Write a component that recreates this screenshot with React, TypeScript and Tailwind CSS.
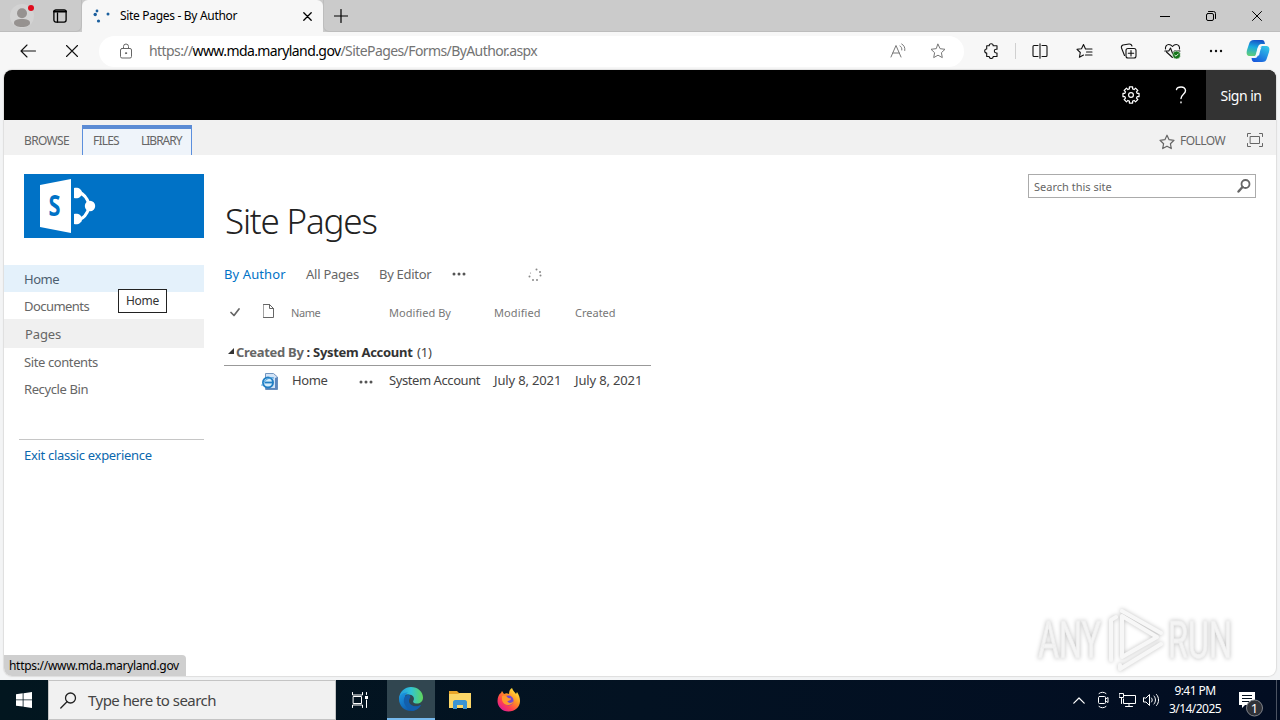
import React from "react";

type IconProps = { w: number; h: number; className?: string; sw?: number; children: React.ReactNode };

function Icon({ w, h, className = "", sw = 1, children }: IconProps) {
  return (
    <svg
      width={w}
      height={h}
      viewBox={`0 0 ${w} ${h}`}
      fill="none"
      stroke="currentColor"
      strokeWidth={sw}
      strokeLinejoin="round"
      strokeLinecap="round"
      className={`block shrink-0 ${className}`}
    >
      {children}
    </svg>
  );
}

const STAR = "M8 1.2l2.1 4.5 4.9.6-3.6 3.4.9 4.9L8 12.2l-4.3 2.4.9-4.9L1 6.3l4.9-.6z";

/* Outline of an eight-toothed gear centred on (9, 9). */
const GEAR =
  Array.from({ length: 8 }, (_, i) =>
    [
      [-0.26, 6.3],
      [-0.2, 8.2],
      [0.2, 8.2],
      [0.26, 6.3],
    ]
      .map(([offset, r]) => {
        const a = (i * Math.PI) / 4 + offset;
        return `${(9 + r * Math.sin(a)).toFixed(2)} ${(9 - r * Math.cos(a)).toFixed(2)}`;
      })
      .join("L")
  ).reduce((d, part, i) => d + (i === 0 ? "M" : "L") + part, "") + "Z";

function TabStrip() {
  return (
    <div className="flex h-8 bg-[#cbcbcb] text-black">
      <div className="flex w-[82px] rounded-br-md border-b border-r border-[#bdbdbd] pt-[4px]">
        <Icon w={28} h={26} className="ml-[8px]">
          <circle cx="14" cy="12" r="12" fill="#d3d3d3" stroke="none" />
          <circle cx="14" cy="9.3" r="5" fill="#969290" stroke="none" />
          <path d="M6 19c0-3 3-4 8-4s8 1 8 4c0 2.500-3.500 4-8 4s-8-1.500-8-4z" fill="#969290" stroke="none" />
          <circle cx="23" cy="4" r="3" fill="#e00b1c" stroke="none" />
        </Icon>
        <Icon w={14} h={14} sw={1.3} className="ml-[17px] mt-[5px]">
          <rect x="0.900" y="0.900" width="12.200" height="12.200" rx="2" />
          <path d="M1 2.500h12" strokeWidth="2" />
          <path d="M4.500 4v9" />
        </Icon>
      </div>
      <div className="flex w-[241px] items-center rounded-t-md bg-[#f7f7f7]">
        <Icon w={20} h={18} className="ml-[10px]">
          <g fill="#1b5f9e" stroke="none">
            <circle cx="5" cy="4" r="1.400" />
            <circle cx="3.200" cy="7.500" r="1.700" />
            <circle cx="6.500" cy="14" r="1.600" />
            <circle cx="16" cy="7" r="1.500" />
          </g>
        </Icon>
        <span className="ml-[8px] w-[183px] whitespace-nowrap text-[12px] leading-4 tracking-[-0.31px]">Site Pages - By Author</span>
        <Icon w={9} h={9} sw={1.3}>
          <path d="M.8.8l7.400 7.400M8.200.8L.8 8.200" />
        </Icon>
      </div>
      <div className="flex flex-1 items-center rounded-bl-md border-b border-l border-[#bdbdbd]">
        <Icon w={14} h={14} sw={1.2} className="ml-[10px]">
          <path d="M7 .5v13M.5 7h13" />
        </Icon>
        <Icon w={10} h={10} className="ml-auto">
          <path d="M0 5.500h10" />
        </Icon>
        <Icon w={10} h={10} className="ml-[36px]">
          <rect x=".5" y="2.500" width="7" height="7" rx="1.500" />
          <path d="M2.500.5h5a2 2 0 0 1 2 2v5" />
        </Icon>
        <Icon w={10} h={10} className="ml-[36px] mr-[18px]">
          <path d="M.5.5l9 9M9.500.5l-9 9" />
        </Icon>
      </div>
    </div>
  );
}

function Toolbar() {
  return (
    <div className="flex h-[38px] items-center bg-[#f7f7f7] text-[#111]">
      <Icon w={16} h={14} sw={1.1} className="ml-[20px]">
        <path d="M15.500 7H1M7 1L1 7l6 6" />
      </Icon>
      <Icon w={12} h={12} sw={1.1} className="ml-[30px]">
        <path d="M.5.5l11 11M11.500.5l-11 11" />
      </Icon>
      <div className="ml-[21px] flex h-[31px] w-[865px] items-center rounded-full bg-white">
        <Icon w={12} h={16} className="ml-[21px] text-[#666]">
          <rect x=".5" y="5.500" width="11" height="9.500" rx="1.500" />
          <path d="M3.500 5.500V3.500a2.500 2.500 0 0 1 5 0v2" />
          <circle cx="6" cy="10.200" r=".6" fill="currentColor" />
        </Icon>
        <span className="ml-[17px] whitespace-nowrap text-[14px] leading-5 tracking-[-0.59px] text-[#737373]">
          https://<span className="text-black">www.mda.maryland.gov</span>/SitePages/Forms/ByAuthor.aspx
        </span>
        <Icon w={17} h={16} className="ml-auto text-[#777]">
          <path d="M1 14L6 2.500 11 14M2.800 10h6.400M10 3c1.500.8 2 2.200 1.800 4M11.700 1c2.500 1.400 3.500 3.600 3.100 6.500" />
        </Icon>
        <Icon w={16} h={16} className="ml-[23px] mr-[18px] text-[#777]">
          <path d={STAR} />
        </Icon>
      </div>
      <Icon w={16} h={16} sw={1.1} className="ml-[19px]">
        <path d="M3.700 2.800H6.200a2 2 0 0 1 4 0h3.800v3.400h-.8a1.900 1.900 0 0 0 0 3.800h.8v3.500h-3.800a2 2 0 0 1-4 0H3.700V10a2 2 0 0 1 0-4z" />
      </Icon>
      <div className="ml-[16px] h-4 w-px bg-[#d0d0d0]" />
      <Icon w={16} h={16} sw={1.1} className="ml-[16px]">
        <path d="M6 2.500H2a1 1 0 0 0-1 1v9a1 1 0 0 0 1 1h4M10 2.500h4a1 1 0 0 1 1 1v9a1 1 0 0 1-1 1h-4M8 .8v14.400" />
      </Icon>
      <Icon w={17} h={16} sw={1.1} className="ml-[28px]">
        <path d="M9.500 6L7.500 1.500 5.500 5.800l-4.500.5 3.300 3.200-.9 4.800 4.100-2.300M9.500 6H16M10.500 9H16M9.500 12H16" />
      </Icon>
      <Icon w={17} h={16} sw={1.1} className="ml-[27px]">
        <rect x="6" y="5.500" width="10" height="9.500" rx="2" />
        <path d="M11 7.500v5.500M8.300 10.200h5.400M4.500 12.500L1.500 5A2.500 2.500 0 0 1 3 2l6-1c1.500-.2 2.500.5 3 2" />
      </Icon>
      <Icon w={17} h={16} sw={1.1} className="ml-[27px]">
        <path d="M8.500 14.500L2.500 9M1.500 6c-.4-2.500 1-4.500 3.300-4.500 1.700 0 2.800.9 3.700 2 .9-1.100 2-2 3.700-2 2.300 0 3.700 2 3.300 4.500M.8 8h4l1.700-3 2.300 6L10.500 8H16" />
        <circle cx="12.500" cy="12" r="4" fill="#16761b" stroke="#f7f7f7" strokeWidth=".6" />
        <path d="M10.800 12.200l1.200 1 2.200-2.200" stroke="#fff" strokeWidth=".9" />
      </Icon>
      <Icon w={14} h={4} className="ml-[28px]">
        <g fill="currentColor" stroke="none">
          <circle cx="2" cy="2" r="1.200" />
          <circle cx="7" cy="2" r="1.200" />
          <circle cx="12" cy="2" r="1.200" />
        </g>
      </Icon>
      <svg width="24" height="24" viewBox="0 0 24 24" className="ml-[23px] block shrink-0">
        <defs>
          <linearGradient id="cpA" x1="0.500" y1="0" x2="0.300" y2="1">
            <stop offset="0" stopColor="#1553c8" />
            <stop offset="0.450" stopColor="#19a9df" />
            <stop offset="1" stopColor="#62ce78" />
          </linearGradient>
          <linearGradient id="cpB" x1="0.800" y1="0" x2="0.200" y2="1">
            <stop offset="0" stopColor="#31c5e8" />
            <stop offset="1" stopColor="#1757dc" />
          </linearGradient>
        </defs>
        <path d="M8 1h8c2 0 2.500 1.500 3 4h-4c-2 0-3 2-4 6-1 4-1 6-3 6H4c-3 0-4-2-3-6l2-6c1-3 2-4 5-4z" fill="url(#cpA)" />
        <path d="M16 23H9c-3 0-3-2-3.500-4H9c2 0 3-2 4-6 1-4 1.500-6 4-6h3c3 0 4 2 3 6l-2 6c-1 3-2 4-5 4z" fill="url(#cpB)" />
        <path d="M12 8.500h3.500c-1.500 2-1.500 5-2.500 8H9.500c1.500-2 1.200-5 2.500-8z" fill="#f6fbff" />
      </svg>
    </div>
  );
}

function SuiteBar() {
  return (
    <div className="flex h-[50px] items-center justify-end bg-black text-white">
      <Icon w={18} h={18} sw={1.2} className="mr-[35px]">
        <path d={GEAR} />
        <circle cx="9" cy="9" r="2.400" />
      </Icon>
      <Icon w={12} h={18} sw={1.4} className="mr-[19px]">
        <path d="M1.500 3.500C2 1.500 4 1 6 1c3 0 4.500 1.500 4.500 3.700C10.500 8 6 8.500 6 12.500M6 16v.8" />
      </Icon>
      <div className="flex h-full w-[70px] items-center justify-center bg-[#333] text-[14px] tracking-[-0.5px]">Sign in</div>
    </div>
  );
}

function Ribbon() {
  return (
    <div className="flex h-[35px] items-start bg-[#f1f1f1] text-[12px] leading-4 text-[#666]">
      <span className="ml-[20px] mt-[13px] w-[58px] whitespace-nowrap tracking-[-0.65px]">BROWSE</span>
      <div className="mt-[5px] flex h-[30px] w-[110px] border-x border-t-4 border-x-[#5b8fdd] border-t-[#5b8bd4] bg-[#eff4fa] pt-[4px]">
        <span className="ml-[10px] w-[48px] whitespace-nowrap tracking-[-0.8px]">FILES</span>
        <span className="whitespace-nowrap tracking-[-1px]">LIBRARY</span>
      </div>
      <Icon w={16} h={16} sw={1.2} className="ml-auto mr-[5px] mt-[14px]">
        <path d={STAR} />
      </Icon>
      <span className="mt-[13px] w-[67px] whitespace-nowrap tracking-[-0.55px]">FOLLOW</span>
      <Icon w={16} h={14} className="mr-[13px] mt-[13px]">
        <rect x="3.500" y="3.500" width="9" height="7" />
        <path d="M.5 3.500v-3h3M12.500.5h3v3M15.500 10.500v3h-3M3.500 13.500h-3v-3" />
      </Icon>
    </div>
  );
}

function SiteLogo() {
  return (
    <div className="ml-[20px] h-16 w-[180px] bg-[#0072c6]">
      <svg width="80" height="64" viewBox="0 0 80 64" className="block">
        <path d="M16 11l31-6v54l-31-6z" fill="#fff" />
        <text x="24.500" y="42" fontSize="28" fontWeight="700" fill="#0072c6" textLength="12" lengthAdjust="spacingAndGlyphs">S</text>
        <g fill="#fff">
          <path d="M50 14c4-1 8 1 8 5 0 4-4 6-8 5z" />
          <path d="M50 40c4-1 8 1 8 5 0 4-4 6-8 5z" />
          <circle cx="66" cy="32" r="5.200" />
        </g>
        <path d="M55 18c5 2 8 6 10 12M55 46c5-2 8-6 10-12" stroke="#fff" strokeWidth="3" fill="none" />
      </svg>
    </div>
  );
}

function Sidebar() {
  return (
    <div className="relative w-[200px] shrink-0 pt-[19px] text-[13px] text-[#666]">
      <SiteLogo />
      <nav className="mt-[27px] whitespace-nowrap leading-[18px]">
        <div className="h-[27px] bg-[#e4f1fb] pl-[20px] pt-[5px] tracking-[-0.5px] text-[#4c5f70]">Home</div>
        <div className="h-[27px] pl-[20px] pt-[5px] tracking-[-0.55px]">Documents</div>
        <div className="h-[29px] bg-[#f0f0f0] pl-[21px] pt-[6px] tracking-[-0.1px]">Pages</div>
        <div className="h-[28px] pl-[20px] pt-[5px] tracking-[-0.4px]">Site contents</div>
        <div className="h-[28px] pl-[20px] pt-[4px] tracking-[-0.4px]">Recycle Bin</div>
      </nav>
      <div className="ml-[15px] mt-[35px] whitespace-nowrap border-t border-[#c6c6c6] pl-[5px] pt-[6px] leading-[18px] tracking-[-0.31px] text-[#0b68ae]">
        Exit classic experience
      </div>
      <div className="absolute left-[114px] top-[134px] flex h-[24px] w-[49px] items-center justify-center border border-[#222] bg-white text-[12px] tracking-[-0.3px] text-[#333]">
        Home
      </div>
    </div>
  );
}

function Dots() {
  return (
    <Icon w={14} h={4}>
      <g fill="#555" stroke="none">
        <circle cx="2" cy="2" r="1.500" />
        <circle cx="7" cy="2" r="1.500" />
        <circle cx="12" cy="2" r="1.500" />
      </g>
    </Icon>
  );
}

function ListView() {
  return (
    <div className="w-[427px] whitespace-nowrap text-[13px] leading-[18px] text-[#444]">
      <div className="flex h-[18px] items-center text-[#666]">
        <span className="w-[82px] tracking-[0.1px] text-[#0072c6]">By Author</span>
        <span className="w-[73px] tracking-[-0.25px]">All Pages</span>
        <span className="w-[73px] tracking-[-0.3px]">By Editor</span>
        <Dots />
        <Icon w={14} h={14} className="ml-[62px] mt-[2px]">
          <g fill="#888" stroke="none">
            <circle cx="8.500" cy="1.500" r="1" />
            <circle cx="12" cy="4" r="1" />
            <circle cx="12.500" cy="7.500" r="1" />
            <circle cx="9" cy="12" r="1" />
            <circle cx="5" cy="12" r="1" />
            <circle cx="1.500" cy="8.500" r="1" />
            <circle cx="2.500" cy="5" r=".6" />
          </g>
        </Icon>
      </div>
      <div className="mt-[21px] flex h-[18px] items-center text-[11px] text-[#777]">
        <Icon w={10} h={9} sw={1.7} className="mb-[2px] ml-[6px]">
          <path d="M1 4.500L4 7.500 9 1" stroke="#666" />
        </Icon>
        <Icon w={11} h={14} className="mb-[5px] ml-[23px]">
          <path d="M.5.5h6l4 4v9H.5zM6.500.5v4h4" stroke="#666" />
        </Icon>
        <span className="ml-[17px] w-[98px] tracking-[-0.4px]">Name</span>
        <span className="w-[105px] tracking-[0.05px]">Modified By</span>
        <span className="w-[81px] tracking-[0.1px]">Modified</span>
        <span>Created</span>
      </div>
      <div className="mt-[21px] flex h-[23px] items-start border-b border-[#999]">
        <Icon w={6} h={6} className="ml-[4px] mt-[5px]">
          <path d="M6 0v6H0z" fill="#333" stroke="none" />
        </Icon>
        <span className="ml-[2px] w-[181px] font-bold tracking-[-0.3px] text-[#666]">
          Created By <span className="text-[#333]">: System Account</span>
        </span>
        <span className="tracking-[-0.2px]">(1)</span>
      </div>
      <div className="mt-[5px] flex h-[18px] items-center">
        <svg width="17" height="17" viewBox="0 0 17 17" className="ml-[37px] mt-[3px] block shrink-0">
          <path d="M4.500.5h8l4 3.500v12.500h-12z" fill="#d3e4f7" stroke="#7496bf" />
          <path d="M14 5l2.500-1v12.500H5V15h9z" fill="#5c86bd" />
          <circle cx="7" cy="9.500" r="5" fill="#d5edfc" stroke="#227fc4" strokeWidth="2" />
          <path d="M3.500 9.500h7.500" stroke="#227fc4" strokeWidth="1.800" />
          <path d="M1 13C0 10 8 3 13 5" fill="none" stroke="#4aa0dc" />
        </svg>
        <span className="ml-[14px] w-[67px] tracking-[-0.4px]">Home</span>
        <span className="mt-[3px] w-[30px]"><Dots /></span>
        <span className="w-[105px] tracking-[-0.42px]">System Account</span>
        <span className="w-[81px] tracking-[-0.15px]">July 8, 2021</span>
        <span className="tracking-[-0.15px]">July 8, 2021</span>
      </div>
    </div>
  );
}

function Watermark() {
  return (
    <svg
      width="210"
      height="72"
      viewBox="0 0 210 72"
      className="absolute bottom-[1px] right-[36px] overflow-visible drop-shadow-[0_0_2px_rgba(0,0,0,0.25)]"
    >
      <g fill="#f4f4f4" stroke="#efefef" strokeWidth="1" fontSize="51" fontFamily="Roboto">
        <text x="8" y="55" textLength="63" lengthAdjust="spacingAndGlyphs">ANY</text>
        <text x="138" y="55" textLength="64" lengthAdjust="spacingAndGlyphs">RUN</text>
      </g>
      <g fill="none" stroke="#f7f7f7" strokeWidth="4" strokeLinejoin="round" strokeLinecap="round">
        <path d="M92 13v41l35-20z" />
        <path d="M86 14l-5 3v40M92 8l39 22M90 62v4l41-25" />
      </g>
    </svg>
  );
}

function Page() {
  return (
    <div className="relative mx-[4px] h-[606px] overflow-hidden rounded-lg bg-white shadow-[0_0_1px_1px_#dedede]">
      <SuiteBar />
      <Ribbon />
      <div className="flex">
        <Sidebar />
        <main className="ml-[20px] pt-[39px]">
          <h1 className="ml-px h-[54px] whitespace-nowrap text-[35px] font-light leading-[54px] tracking-[-1.2px] text-[#222]">Site Pages</h1>
          <div className="mt-[17px]">
            <ListView />
          </div>
        </main>
        <div className="ml-auto mr-[20px] mt-[19px] flex h-[24px] w-[228px] items-center border border-[#ababab] pl-[5px] text-[11px] text-[#666]">
          <span className="whitespace-nowrap pt-[2px]">Search this site</span>
          <Icon w={14} h={14} sw={1.8} className="ml-auto mr-[4px]">
            <circle cx="8.500" cy="5" r="4" />
            <path d="M5.500 8L1.500 12.500" strokeWidth="2.400" />
          </Icon>
        </div>
      </div>
      <div className="absolute bottom-0 left-0 flex h-[21px] w-[182px] items-center rounded-tr bg-[#cfcfcf] pl-[5px] text-[12px] text-black">
        <span className="whitespace-nowrap tracking-[-0.3px]">https://www.mda.maryland.gov</span>
      </div>
      <Watermark />
    </div>
  );
}

function EdgeLogo() {
  return (
    <svg width="24" height="24" viewBox="0 0 24 24" className="block">
      <defs>
        <linearGradient id="eg1" x1="0" y1="0.300" x2="1" y2="0.300">
          <stop offset="0" stopColor="#239ade" />
          <stop offset="0.500" stopColor="#31c3d5" />
          <stop offset="1" stopColor="#60d65a" />
        </linearGradient>
        <linearGradient id="eg2" x1="0" y1="0" x2="0.700" y2="1">
          <stop offset="0" stopColor="#1c9be4" />
          <stop offset="1" stopColor="#0c51a5" />
        </linearGradient>
      </defs>
      <path d="M0 11C1 4 6 0 12 0c7 0 12 5 12 10.500 0 4-3 6-6 6-3.500 0-4.500-1.500-3.500-3 1.500-2.500-.5-6-5-6C5 7.500 1 9 0 13z" fill="url(#eg1)" />
      <path d="M0 12c0-4 4-7 9-6.500C6.500 7 5.500 9.500 6 12c1 5 6 8 11 7.500 2-.2 3.500-1 5-1.500-2 4-6 6-10 6C5 24 0 18.500 0 12z" fill="url(#eg2)" />
      <path d="M9 7.500C5 9 4 13 5.500 17c1.500 3.500 4.500 6 8.500 6.800 3.500-.8 6.500-3 8-5.800-3 1.500-7 1.800-9.500 0C9.500 16 9.500 13 11 11c1-1.300 0-3.300-2-3.500z" fill="#135fac" />
    </svg>
  );
}

function Taskbar() {
  return (
    <div className="flex h-10 bg-gradient-to-r from-[#02161f] via-[#031222] to-[#020d22] text-white">
      <div className="flex w-[48px] items-center justify-center">
        <svg width="16" height="16" viewBox="0 0 16 16" fill="#fff" className="block">
          <path d="M0 2.200L6.700 1.300v6.200H0zM7.500 1.200L16 0v7.500H7.500zM0 8.300h6.700v6.300L0 13.700zM7.500 8.300H16V16l-8.500-1.200z" />
        </svg>
      </div>
      <div className="flex w-[288px] items-center border border-[#c4c4c4] bg-[#f1f1f1] text-[15px] text-[#444]">
        <Icon w={17} h={17} sw={1.3} className="ml-[11px] text-[#222]">
          <circle cx="10.500" cy="6" r="5" />
          <path d="M7 9.800L.8 16" />
        </Icon>
        <span className="ml-[11px] whitespace-nowrap tracking-[-0.53px]">Type here to search</span>
      </div>
      <div className="flex w-[49px] items-center justify-center">
        <Icon w={17} h={16}>
          <path d="M.5.5v2.500h10V.5M1.500 4.500h8v7h-8zM.5 15.500V13h10v2.500M14.500.5v2M14.500 8v7.500" />
          <path d="M13 4h3v3h-3z" fill="#fff" stroke="none" />
        </Icon>
      </div>
      <div className="ml-[2px] flex w-[48px] items-center justify-center border-b-2 border-[#76b9ed] bg-[#314650]">
        <EdgeLogo />
      </div>
      <div className="flex w-[49px] items-center justify-center">
        <svg width="22" height="20" viewBox="0 0 22 20" className="block">
          <path d="M0 1h8l2 2h11v15H0z" fill="#e9a62a" />
          <path d="M0 4h9l2-1h11v15H0z" fill="#fbd667" />
          <path d="M4 19v-7c0-1 1-2 2-2h10c1 0 2 1 2 2v7h-4v-4H8v4z" fill="#3a93d2" />
          <path d="M8 15h6v3H8z" fill="#fbd667" />
        </svg>
      </div>
      <div className="flex w-[49px] items-center justify-center">
        <svg width="24" height="24" viewBox="0 0 24 24" className="block">
          <defs>
            <linearGradient id="ffx" x1="0.850" y1="0.100" x2="0.200" y2="0.900">
              <stop offset="0" stopColor="#ffe63b" />
              <stop offset="0.400" stopColor="#ff9124" />
              <stop offset="0.750" stopColor="#ff3f50" />
              <stop offset="1" stopColor="#e3208d" />
            </linearGradient>
          </defs>
          <path d="M5 3l2 3c2-1 3-1 5 0 0-3 1-5 3-6 1 3 3 4 4 6l1-2c2 3 3 6 3 9 0 6-5 10.500-11.500 10.500S.5 18.500.5 13C.5 9 2 6 4 5z" fill="url(#ffx)" />
          <circle cx="11.500" cy="12.500" r="5" fill="#7247cf" />
          <path d="M5 8c3-1 5 0 6 2l3 .5c0 2-2 2-3.500 2.500 0 2 4 3 6 0-1 5-10 6-11.500-1z" fill="#ff9a2c" />
        </svg>
      </div>
      <div className="ml-auto flex items-center">
        <Icon w={12} h={7} sw={1.2} className="mr-[12px]">
          <path d="M.8 6.200L6 1l5.200 5.200" />
        </Icon>
        <Icon w={12} h={18} className="mr-[10px]">
          <rect x="1.500" y="5.500" width="7" height="7" rx="1" />
          <path d="M8.500 8l2.500-1.500v5L8.500 10M2 2.500c2-1.700 5-1.700 7 0M2 15.500c2 1.700 5 1.700 7 0" />
        </Icon>
        <Icon w={17} h={14} className="mr-[7px]">
          <path d="M5 2.500h11.500v8H4.500V6M10 10.500v3M6.500 13.500h7M.5.500h4v4h-4zM2.500 4.500v6" />
        </Icon>
        <Icon w={17} h={14} className="mr-[7px]">
          <path d="M.5 5v4h2.500l3.500 3.500v-11L3 5zM8.500 5c1 1.200 1 2.800 0 4M11 3c2 2.300 2 5.700 0 8M13.500 1.500c2.800 3 2.800 8 0 11" />
        </Icon>
        <div className="w-[56px] whitespace-nowrap text-center text-[12px] leading-[18px] tracking-[-0.55px]">
          <div>9:41 PM</div>
          <div>3/14/2025</div>
        </div>
        <svg width="26" height="26" viewBox="0 0 26 26" className="ml-[15px] mt-[8px] block shrink-0">
          <path d="M1 1h16v13H7l-3 3v-3H1z" fill="#fff" />
          <path d="M4 4.500h10M4 7.500h10M4 10.500h7" stroke="#03101f" />
          <circle cx="16.500" cy="17" r="8" fill="#303238" stroke="#80838a" />
          <text x="16.500" y="21.500" textAnchor="middle" fontSize="13" fill="#fff">1</text>
        </svg>
        <div className="ml-[12px] mr-[3px] h-10 w-px bg-[#4b5362]" />
      </div>
    </div>
  );
}

export default function App() {
  return (
    <div className="h-[720px] w-[1280px] overflow-hidden bg-[#f3f4f5] font-['Noto_Sans','Open_Sans',sans-serif]">
      <TabStrip />
      <Toolbar />
      <Page />
      <div className="h-[4px]" />
      <Taskbar />
    </div>
  );
}
